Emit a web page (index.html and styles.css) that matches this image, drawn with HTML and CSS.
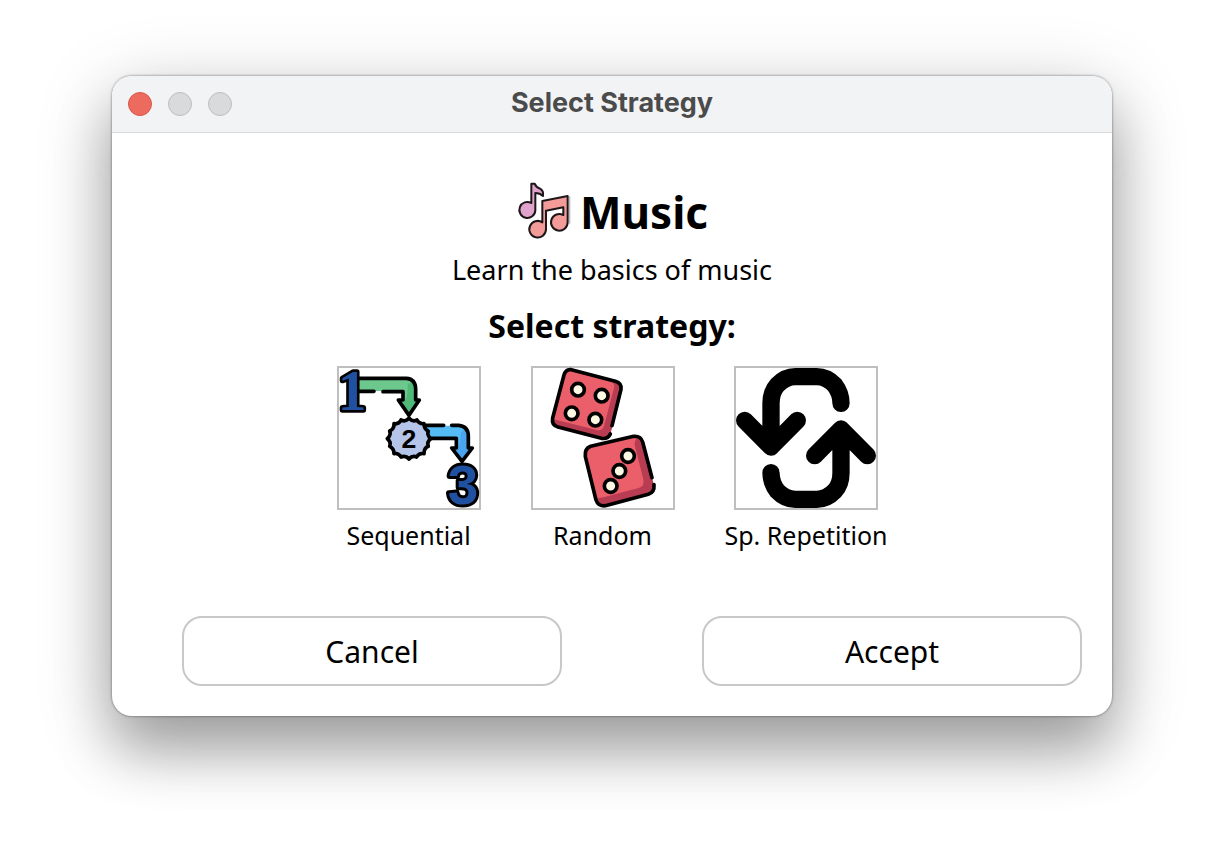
FILE: index.html
```html
<!DOCTYPE html>
<html lang="en">
<head>
<meta charset="utf-8">
<title>Select Strategy</title>
<link rel="stylesheet" href="styles.css">
</head>
<body>
<main class="window">
  <header class="titlebar">
    <div class="lights">
      <button class="light light-close" aria-label="Close"></button>
      <button class="light" aria-label="Minimize" disabled></button>
      <button class="light" aria-label="Zoom" disabled></button>
    </div>
    <h1 class="title">Select Strategy</h1>
  </header>
  <div class="content">
    <div class="course">
      <svg class="course-icon" viewBox="42 35 180 180" aria-hidden="true">
        <g stroke="#1d1719" stroke-width="6" stroke-linejoin="round">
          <path fill="#dfa3cc" d="M88 40 L98 40 Q102 51 114 55 Q126 62 123 77 Q114 68 100 68 L100 120 A24 24 0 1 1 88 98 Z"/>
          <path fill="#f29b98" d="M121 92 L197 77 L197 156 A25 25 0 1 1 184 134 L184 111 L132 121 L132 177 A25 25 0 1 1 121 156 Z"/>
        </g>
        <path d="M203 78V160" stroke="#bbb" stroke-width="4"/>
      </svg>
      <h2 class="course-name">Music</h2>
    </div>
    <p class="description">Learn the basics of music</p>
    <h3 class="prompt">Select strategy:</h3>
    <div class="strategies">
      <div class="strategy">
        <button class="tile" aria-labelledby="sequential">
          <svg viewBox="30 24 420 420" aria-hidden="true">
            <g stroke="#000" stroke-width="11" stroke-linejoin="round" stroke-linecap="round">
              <path fill="#6dc88e" stroke="none" d="M84 55H235Q260 58 260 86V120H271L240 166L208 120H222V93H84Z"/>
              <path fill="#51b978" stroke="none" d="M236 72L256 62Q260 70 260 88V120H271L240 166L220 130Q238 120 236 72Z"/>
              <path fill="none" d="M86 55H232Q260 57 260 88V120H271L240 166L208 120H222V95H162M135 94H86"/>
              <path fill="#55bbf5" stroke="none" d="M290 197H390Q418 200 418 228V264H430L399 304L368 264H382V233H300Z"/>
              <path fill="#4aa3ef" stroke="none" d="M395 217L414 205Q418 213 418 229V264H430L399 304L378 272Q396 264 395 217Z"/>
              <path fill="none" d="M290 196H344M368 196H389Q418 199 418 228V264H430L399 304L368 264H382V235H300"/>
              <path fill="#b5c5e9" d="M240 174Q250 187 264 180Q271 193 285 191Q284 205 298 214Q293 224 305 236Q293 245 298 259Q285 264 285 281Q270 278 263 291Q250 285 240 297Q230 285 216 291Q209 278 195 281Q195 265 182 259Q187 245 175 236Q187 225 182 213Q196 207 195 191Q209 194 216 180Q230 187 240 174Z"/>
            </g>
            <text class="numeral numeral-one" x="69" y="150">1</text>
            <text class="numeral numeral-two" x="240" y="263">2</text>
            <text class="numeral numeral-three" x="402" y="431">3</text>
          </svg>
        </button>
        <span id="sequential" class="strategy-name">Sequential</span>
      </div>
      <div class="strategy">
        <button class="tile" aria-labelledby="random">
          <svg viewBox="27 24 420 420" aria-hidden="true">
            <g stroke-linejoin="round" stroke-linecap="round">
              <path fill="#eb5f6b" d="M142 29L274 64Q294 70 291 90L260 218Q253 240 232 235L102 201Q82 195 86 174L120 45Q126 28 142 29Z"/>
              <path fill="#b93d52" d="M271 67Q292 73 291 91L260 218Q252 239 231 235L102 201Q84 195 86 177L218 210Q235 214 240 198L270 84Q273 74 264 65Z"/>
              <path fill="none" stroke="#000" stroke-width="11" d="M264 197L291 88Q294 70 274 64L142 29Q126 26 120 45L86 174Q82 195 102 201L232 235Q252 238 259 222"/>
              <path fill="#eb5f6b" d="M200 259L329 229Q350 227 356 246L390 377Q391 395 373 403L244 437Q223 440 216 420L184 290Q181 266 200 259Z"/>
              <path fill="#b93d52" d="M328 229Q350 227 356 246L390 377Q391 395 373 403L244 437Q223 440 217 415Q225 415 238 412L344 384Q363 378 358 358L332 256Q331 244 336 238Z"/>
              <path fill="none" stroke="#000" stroke-width="11" d="M384 353L356 246Q350 227 329 229L200 259Q181 266 184 290L216 420Q223 440 244 437L373 403Q392 397 390 374"/>
            </g>
            <g fill="#fcf8e3" stroke="#000" stroke-width="11">
              <circle cx="162" cy="89" r="19"/><circle cx="233" cy="107" r="19"/>
              <circle cx="143" cy="160" r="19"/><circle cx="214" cy="179" r="19"/>
              <circle cx="312" cy="288" r="19"/><circle cx="286" cy="333" r="19"/><circle cx="260" cy="378" r="19"/>
            </g>
          </svg>
        </button>
        <span id="random" class="strategy-name">Random</span>
      </div>
      <div class="strategy">
        <button class="tile" aria-labelledby="repetition">
          <svg viewBox="48 24 420 420" aria-hidden="true">
            <g fill="none" stroke="#000" stroke-width="52" stroke-linejoin="round" stroke-linecap="round">
              <path d="M363 130Q363 100 344 75Q320 50 290 50H226Q196 50 172 75Q153 96 153 130V255M74 181L153 261L232 181"/>
              <path d="M153 338Q153 368 172 393Q196 418 226 418H290Q320 418 344 393Q363 372 363 338V215M284 287L363 207L442 287"/>
            </g>
          </svg>
        </button>
        <span id="repetition" class="strategy-name">Sp. Repetition</span>
      </div>
    </div>
    <footer class="actions">
      <button class="action">Cancel</button>
      <button class="action">Accept</button>
    </footer>
  </div>
</main>
</body>
</html>
```
FILE: styles.css
```css
* {
  box-sizing: border-box;
}

body {
  display: flex;
  min-height: 100vh;
  margin: 0;
  padding: 76px 112px 148px;
  background: #fff;
  color: #000;
  font-family: "Noto Sans", "Open Sans", sans-serif;
}

h1, h2, h3, p {
  margin: 0;
}

button {
  padding: 0;
  color: inherit;
  font-family: inherit;
}

.window {
  display: flex;
  flex: 1;
  flex-direction: column;
  border-radius: 20px;
  background: #fff;
  box-shadow: 0 0 2px 1px rgba(0, 0, 0, 0.25), 0 36px 56px rgba(0, 0, 0, 0.28), 0 16px 80px rgba(0, 0, 0, 0.2);
}

.titlebar {
  display: grid;
  grid-template-columns: 1fr auto 1fr;
  align-items: center;
  height: 57px;
  padding: 0 16px;
  border-bottom: 1px solid #d8d9da;
  border-radius: 20px 20px 0 0;
  background: #f2f3f5;
}

.lights {
  display: flex;
  gap: 16px;
}

.light {
  width: 24px;
  height: 24px;
  border: 1px solid #bdbebf;
  border-radius: 50%;
  background: #d9dadc;
}

.light-close {
  border-color: #d9564b;
  background: #ed6a5e;
}

.title {
  padding-bottom: 2px;
  color: #4b4b4b;
  font: bold 27px/32px Inter, sans-serif;
}

.content {
  display: flex;
  flex: 1;
  flex-direction: column;
  align-items: center;
  padding: 47px 30px 30px 70px;
}

.course, .description, .prompt, .strategies {
  margin-right: 40px;
}

.course {
  display: flex;
  align-items: center;
  gap: 4px;
}

.course-icon {
  width: 60px;
  height: 60px;
}

.course-name {
  font-size: 44px;
  line-height: 64px;
}

.description {
  margin-top: 8px;
  font-size: 27px;
  line-height: 36px;
}

.prompt {
  margin-top: 16px;
  font-size: 32px;
  line-height: 44px;
}

.strategies {
  display: flex;
  gap: 50px;
  margin-top: 18px;
}

.strategy {
  display: flex;
  flex-direction: column;
  align-items: center;
  gap: 8px;
}

.tile {
  width: 144px;
  height: 144px;
  border: 2px solid #bfbfbf;
  background: #fff;
}

.tile svg {
  display: block;
  width: 100%;
  overflow: visible;
}

.strategy-name {
  font-size: 25px;
  line-height: 34px;
}

.numeral {
  font-family: "Liberation Sans Narrow", "Liberation Sans", sans-serif;
  font-weight: bold;
  text-anchor: middle;
}

.numeral-one {
  fill: #2050a0;
  stroke: #000;
  stroke-width: 16px;
  stroke-linejoin: round;
  paint-order: stroke;
  font-family: "Liberation Sans Narrow", "Liberation Serif", serif;
  font-size: 172px;
}

.numeral-two {
  font-size: 80px;
}

.numeral-three {
  fill: #2050a0;
  stroke: #000;
  stroke-width: 18px;
  stroke-linejoin: round;
  paint-order: stroke;
  font-family: "Liberation Sans", sans-serif;
  font-size: 164px;
}

.actions {
  display: grid;
  grid-template-columns: 1fr 1fr;
  gap: 140px;
  align-self: stretch;
  margin-top: auto;
}

.action {
  height: 70px;
  border: 2px solid #c8c8c8;
  border-radius: 20px;
  background: #fff;
  font-size: 30px;
}
```
